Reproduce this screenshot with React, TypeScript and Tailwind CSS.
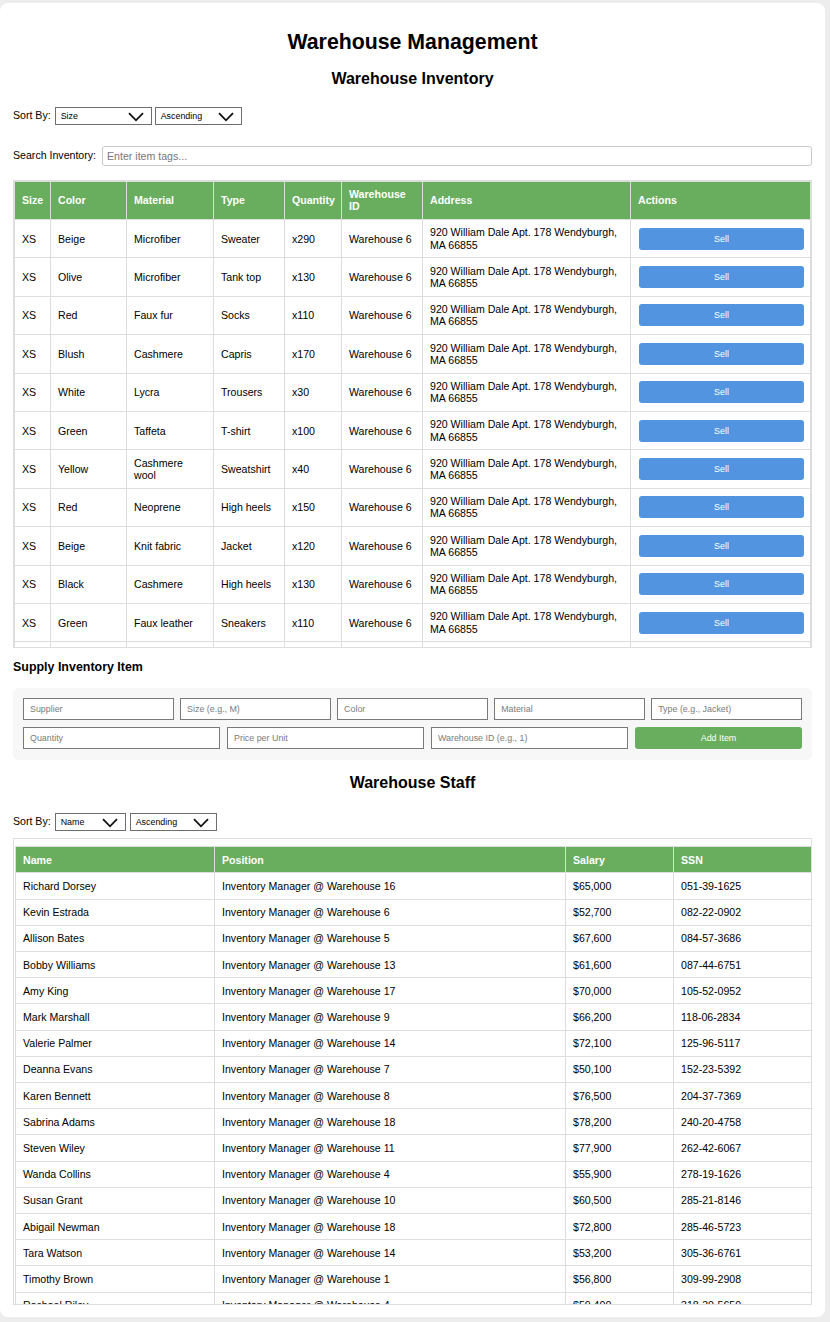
import React from "react";

const inventory = [
  ["XS", "Beige", "Microfiber", "Sweater", "x290"],
  ["XS", "Olive", "Microfiber", "Tank top", "x130"],
  ["XS", "Red", "Faux fur", "Socks", "x110"],
  ["XS", "Blush", "Cashmere", "Capris", "x170"],
  ["XS", "White", "Lycra", "Trousers", "x30"],
  ["XS", "Green", "Taffeta", "T-shirt", "x100"],
  ["XS", "Yellow", "Cashmere wool", "Sweatshirt", "x40"],
  ["XS", "Red", "Neoprene", "High heels", "x150"],
  ["XS", "Beige", "Knit fabric", "Jacket", "x120"],
  ["XS", "Black", "Cashmere", "High heels", "x130"],
  ["XS", "Green", "Faux leather", "Sneakers", "x110"],
  ["XS", "Navy", "Polyester", "Hoodie", "x90"],
];

const staff = [
  ["Richard Dorsey", "16", "$65,000", "051-39-1625"],
  ["Kevin Estrada", "6", "$52,700", "082-22-0902"],
  ["Allison Bates", "5", "$67,600", "084-57-3686"],
  ["Bobby Williams", "13", "$61,600", "087-44-6751"],
  ["Amy King", "17", "$70,000", "105-52-0952"],
  ["Mark Marshall", "9", "$66,200", "118-06-2834"],
  ["Valerie Palmer", "14", "$72,100", "125-96-5117"],
  ["Deanna Evans", "7", "$50,100", "152-23-5392"],
  ["Karen Bennett", "8", "$76,500", "204-37-7369"],
  ["Sabrina Adams", "18", "$78,200", "240-20-4758"],
  ["Steven Wiley", "11", "$77,900", "262-42-6067"],
  ["Wanda Collins", "4", "$55,900", "278-19-1626"],
  ["Susan Grant", "10", "$60,500", "285-21-8146"],
  ["Abigail Newman", "18", "$72,800", "285-46-5723"],
  ["Tara Watson", "14", "$53,200", "305-36-6761"],
  ["Timothy Brown", "1", "$56,800", "309-99-2908"],
  ["Rachael Riley", "4", "$59,400", "318-30-5650"],
];

const th = "border border-[#dddddd] bg-[#69ad5e] px-[7px] py-[6.5px] text-left align-middle text-[10.6px] font-bold leading-[12.2px] text-white";
const td = "border border-[#dddddd] px-[7px] py-[6.5px] text-left align-middle text-[10.6px] leading-[12.2px]";
const field = "h-[22px] border border-[#7a7a7a] bg-white px-[6px] text-[8.9px] text-black outline-none placeholder:text-[#7b7b7b]";

function Chevron() {
  return (
    <svg width="16" height="10" viewBox="0 0 16 10" className="pointer-events-none absolute right-[7px] top-[4px]">
      <path d="M1 1.2 L8 8.3 L15 1.2" fill="none" stroke="#111" strokeWidth="1.8" />
    </svg>
  );
}

function Select({ value, width }: { value: string; width: string }) {
  return (
    <div className={`relative h-[18px] ${width} border border-[#6e6e6e] bg-white`}>
      <span className="absolute left-[5px] top-[3.5px] text-[8.9px] leading-[10px]">{value}</span>
      <Chevron />
    </div>
  );
}

export default function App() {
  return (
    <div className="h-[1322px] bg-[#ededed] pt-[3px] pr-[5px] pb-[5px] font-['Liberation_Sans',Arial,sans-serif] text-black">
      <div className="h-[1314px] overflow-hidden rounded-[8px] bg-white px-[13px] pt-[27px]">
        <h1 className="text-center text-[21.3px] font-bold leading-[24.5px]">Warehouse Management</h1>
        <h2 className="mt-[15px] text-center text-[16px] font-bold leading-[18.4px]">Warehouse Inventory</h2>

        <div className="mt-[18.6px] flex items-center text-[10.6px]">
          <span className="mr-[4px]">Sort By:</span>
          <Select value="Size" width="w-[97px]" />
          <div className="w-[3px]" />
          <Select value="Ascending" width="w-[87px]" />
        </div>

        <div className="mt-[21px] flex items-center text-[10.6px]">
          <span className="mr-[6px]">Search Inventory:</span>
          <input
            className="h-[20px] flex-1 rounded-[3px] border border-[#c8c8c8] px-[4px] text-[10.6px] outline-none placeholder:text-[#777]"
            placeholder="Enter item tags..."
          />
        </div>

        <div className="mt-[14px] h-[468px] overflow-hidden border border-[#dddddd]">
          <table className="w-[796px] table-fixed border-collapse">
            <colgroup>
              <col className="w-[36px]" />
              <col className="w-[76px]" />
              <col className="w-[87px]" />
              <col className="w-[71px]" />
              <col className="w-[57px]" />
              <col className="w-[81px]" />
              <col className="w-[208px]" />
              <col className="w-[180px]" />
            </colgroup>
            <thead>
              <tr>
                {["Size", "Color", "Material", "Type", "Quantity", "Warehouse ID", "Address", "Actions"].map((h) => (
                  <th key={h} className={th}>{h}</th>
                ))}
              </tr>
            </thead>
            <tbody>
              {inventory.map((r, i) => (
                <tr key={i}>
                  {r.map((c, j) => (
                    <td key={j} className={td}>{c}</td>
                  ))}
                  <td className={td}>Warehouse 6</td>
                  <td className={td}>920 William Dale Apt. 178 Wendyburgh, MA 66855</td>
                  <td className={`${td} pr-[6px] pl-[8px]`}>
                    <button className="h-[22px] w-full rounded-[3px] bg-[#5294df] text-[8.9px] text-white">Sell</button>
                  </td>
                </tr>
              ))}
            </tbody>
          </table>
        </div>

        <h3 className="mt-[12px] text-[12.45px] font-bold leading-[14.3px]">Supply Inventory Item</h3>

        <div className="mt-[14.7px] h-[72px] rounded-[6px] bg-[#f7f7f7] px-[10px] pt-[10px]">
          <div className="flex gap-[6.25px]">
            {["Supplier", "Size (e.g., M)", "Color", "Material", "Type (e.g., Jacket)"].map((p) => (
              <input key={p} className={`${field} w-0 flex-1`} placeholder={p} />
            ))}
          </div>
          <div className="mt-[7px] flex gap-[7px]">
            {["Quantity", "Price per Unit", "Warehouse ID (e.g., 1)"].map((p) => (
              <input key={p} className={`${field} w-[197px]`} placeholder={p} />
            ))}
            <button className="h-[22px] flex-1 rounded-[3px] bg-[#69ad5e] text-[8.9px] text-white">Add Item</button>
          </div>
        </div>

        <h2 className="mt-[13.5px] text-center text-[16px] font-bold leading-[18.4px]">Warehouse Staff</h2>

        <div className="mt-[20.3px] flex items-center text-[10.6px]">
          <span className="mr-[4px]">Sort By:</span>
          <Select value="Name" width="w-[71px]" />
          <div className="w-[4px]" />
          <Select value="Ascending" width="w-[87px]" />
        </div>

        <div className="mt-[7.5px] h-[467px] overflow-hidden border border-[#dddddd] px-[1px] pt-[7px]">
          <table className="w-[796px] table-fixed border-collapse">
            <colgroup>
              <col className="w-[199px]" />
              <col className="w-[351px]" />
              <col className="w-[108px]" />
              <col className="w-[138px]" />
            </colgroup>
            <thead>
              <tr>
                {["Name", "Position", "Salary", "SSN"].map((h) => (
                  <th key={h} className={th}>{h}</th>
                ))}
              </tr>
            </thead>
            <tbody>
              {staff.map((s) => (
                <tr key={s[3]}>
                  <td className={td}>{s[0]}</td>
                  <td className={td}>Inventory Manager @ Warehouse {s[1]}</td>
                  <td className={td}>{s[2]}</td>
                  <td className={td}>{s[3]}</td>
                </tr>
              ))}
            </tbody>
          </table>
        </div>
      </div>
    </div>
  );
}
